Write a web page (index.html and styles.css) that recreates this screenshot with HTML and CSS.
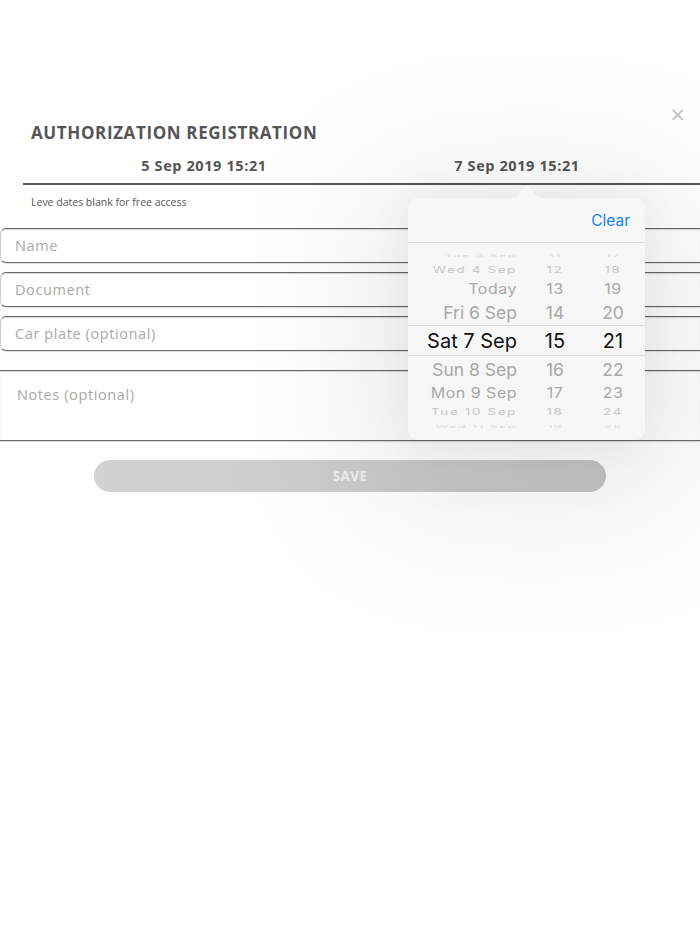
FILE: index.html
```html
<!DOCTYPE html>
<html lang="en">
<head>
    <meta charset="UTF-8">
    <meta name="viewport" content="width=device-width, initial-scale=1.0">
    <title>Authorization Registration</title>
    <link rel="stylesheet" href="styles.css">
</head>
<body>
    <div class="sheet">
        <div class="top-bar">
            <span class="close">&times;</span>
        </div>
        <h1>AUTHORIZATION REGISTRATION</h1>
        <div class="dates">
            <div class="date">5 Sep 2019 15:21</div>
            <div class="date">7 Sep 2019 15:21</div>
        </div>
        <p class="hint">Leve dates blank for free access</p>

        <div class="field first">Name</div>
        <div class="field">Document</div>
        <div class="field">Car plate (optional)</div>
        <div class="field notes">Notes (optional)</div>

        <div class="save-wrap">
            <button class="save">SAVE</button>
        </div>

        <div class="popover">
            <span class="arrow"></span>
            <div class="pop-head">
                <span class="clear">Clear</span>
            </div>
            <div class="wheel">
                <div class="row r4"><span>Tue 3 Sep</span><span>11</span><span>17</span></div>
                <div class="row r3"><span>Wed 4 Sep</span><span>12</span><span>18</span></div>
                <div class="row r2"><span>Today</span><span>13</span><span>19</span></div>
                <div class="row r1"><span>Fri 6 Sep</span><span>14</span><span>20</span></div>
                <div class="row selected"><span>Sat 7 Sep</span><span>15</span><span>21</span></div>
                <div class="row r1"><span>Sun 8 Sep</span><span>16</span><span>22</span></div>
                <div class="row r2"><span>Mon 9 Sep</span><span>17</span><span>23</span></div>
                <div class="row r3"><span>Tue 10 Sep</span><span>18</span><span>24</span></div>
                <div class="row r4"><span>Wed 11 Sep</span><span>19</span><span>25</span></div>
            </div>
        </div>
    </div>
</body>
</html>
```

FILE: styles.css
```css
body {
    margin: 0;
    background: #fff;
    font-family: "Open Sans", sans-serif;
    color: #555;
    overflow: hidden;
}
.sheet {
    position: relative;
    height: 934px;
}
.top-bar {
    padding-top: 104px;
    display: flex;
    justify-content: flex-end;
    padding-right: 14px;
}
.close {
    font-size: 20px;
    line-height: 20px;
    color: #c4c4c4;
    font-family: "DejaVu Sans", sans-serif;
}
h1 {
    margin: -3px 0 0 31px;
    font-size: 17px;
    font-weight: 700;
    letter-spacing: 0.62px;
    color: #555;
    line-height: 24px;
}
.dates {
    margin: 11px 0 0 23px;
    display: grid;
    grid-template-columns: 362px 264px;
    border-bottom: 2px solid #5a5a5a;
    height: 27px;
}
.date {
    text-align: center;
    font-size: 14.5px;
    font-weight: 700;
    line-height: 20px;
    letter-spacing: 0.6px;
}
.hint {
    margin: 9px 0 0 31px;
    font-size: 10.5px;
    line-height: 16px;
}
.field {
    margin-top: 9px;
    height: 33px;
    border: 1px solid #6a6a6a;
    border-right: none;
    border-left-color: #ccc;
    border-radius: 6px 0 0 6px;
    box-shadow: inset 0 1px 1px rgba(0, 0, 0, 0.15), 0 1px 1px rgba(0, 0, 0, 0.12);
    padding-left: 14px;
    font-size: 14.5px;
    line-height: 33px;
    color: #a9a9a9;
    letter-spacing: 0.6px;
}
.field.first {
    margin-top: 18px;
}
.notes {
    margin-top: 19px;
    height: 69px;
    border-left: none;
    border-radius: 0;
    padding-left: 17px;
    line-height: 48px;
}
.save-wrap {
    display: flex;
    justify-content: center;
    margin-top: 19px;
}
.save {
    width: 512px;
    height: 32px;
    border: none;
    border-radius: 16px;
    background: linear-gradient(to right, #d2d2d2, #c6c6c6);
    color: #f0f0f0;
    font-family: "Open Sans", sans-serif;
    font-size: 13.5px;
    font-weight: 700;
    letter-spacing: 0.4px;
}
.popover {
    position: absolute;
    left: 408px;
    top: 198px;
    width: 237px;
    height: 242px;
    background: #f7f7f7;
    border-radius: 10px;
    box-shadow: 0 0 40px rgba(0, 0, 0, 0.05), 0 25px 150px 45px rgba(0, 0, 0, 0.09);
    font-family: Inter, "Noto Sans", sans-serif;
    z-index: 2;
}
.arrow {
    position: absolute;
    left: 107px;
    top: -13px;
    width: 0;
    height: 0;
    border-left: 12px solid transparent;
    border-right: 12px solid transparent;
    border-bottom: 13px solid #f7f7f7;
}
.pop-head {
    height: 44px;
    border-bottom: 1px solid #dcdcdc;
    display: flex;
    justify-content: flex-end;
    align-items: center;
    padding-right: 15px;
}
.clear {
    color: #1a7ff5;
    font-size: 15.5px;
    margin-top: 1px;
}
.wheel {
    margin-top: 6px;
    height: 183px;
    overflow: hidden;
}
.row {
    display: grid;
    grid-template-columns: 109px 76px 40px;
    align-items: center;
    color: #a9a9a9;
    white-space: nowrap;
}
.row span:first-child {
    text-align: right;
}
.row span:not(:first-child) {
    text-align: center;
}
.r4 {
    height: 12px;
    font-size: 13px;
    color: #dadada;
    transform: scaleY(0.25);
    letter-spacing: 1.2px;
}
.r3 {
    height: 17px;
    font-size: 13.5px;
    color: #c6c6c6;
    transform: scaleY(0.62);
    letter-spacing: 1.6px;
}
.r2 {
    height: 21px;
    font-size: 16px;
    color: #a8a8a8;
    transform: scaleY(0.88);
    letter-spacing: 0.5px;
}
.r1 {
    height: 26px;
    font-size: 17.5px;
    color: #a8a8a8;
}
.selected {
    height: 29px;
    font-size: 20px;
    color: #111;
    border-top: 1px solid #dcdcdc;
    border-bottom: 1px solid #dcdcdc;
}
```
